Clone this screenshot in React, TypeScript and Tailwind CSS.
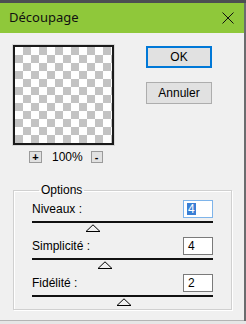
import React from 'react';

const rows = [
  { label: 'Niveaux :', value: '4', thumb: 'ml-[53px]', selected: true },
  { label: 'Simplicité :', value: '4', thumb: 'ml-[65px]', selected: false },
  { label: 'Fidélité :', value: '2', thumb: 'ml-[84px]', selected: false },
];

function Thumb() {
  return (
    <svg width="16" height="8" viewBox="0 0 16 8" className="block">
      <path d="M1 7.5 L8 0.8 L15 7.5 Z" fill="none" stroke="#000" strokeWidth="1" />
    </svg>
  );
}

export default function App() {
  return (
    <div className="w-[246px] h-[324px] flex flex-col overflow-hidden bg-[#e6e6e6] font-['Liberation_Sans',Arial,sans-serif] text-black">
      <div className="h-[3px] bg-[#4c4f52]" />
      <div className="flex">
        <div className="w-[244px] flex flex-col">
          {/* title bar */}
          <div className="h-[30px] bg-[#8fc83a] flex items-center justify-between pl-[9px] pr-[10px]">
            <span className="font-['Noto_Sans',sans-serif] text-[13px] text-[#111]">Découpage</span>
            <svg width="12" height="12" viewBox="0 0 12 12">
              <path d="M0.5 0.5 L11.5 11.5 M11.5 0.5 L0.5 11.5" stroke="#111" strokeWidth="1" />
            </svg>
          </div>

          {/* body */}
          <div className="h-[288px] bg-[#f0f0f0] border-b border-[#b4b4b4] flex flex-col">
            <div className="flex pt-[12px] pl-[13px]">
              <div className="flex flex-col">
                <div className="w-[101px] h-[100px] border-2 border-[#1a1a1a] shadow-[0_0_0_1px_#d8d8d8] bg-[conic-gradient(#c3c3c3_25%,#ffffff_0_50%,#c3c3c3_0_75%,#ffffff_0)] bg-[length:16px_16px]" />
                <div className="flex items-center h-[12px] mt-[6px] pl-[16px] text-[12px]">
                  <div className="w-[13px] h-[12px] bg-[#e1e1e1] border border-[#9a9a9a] flex items-center justify-center text-[11px] leading-none font-bold">+</div>
                  <span className="ml-[10px] leading-none">100%</span>
                  <div className="ml-[8px] w-[12px] h-[12px] bg-[#e1e1e1] border border-[#9a9a9a] flex items-center justify-center text-[11px] leading-none font-bold">-</div>
                </div>
              </div>
              <div className="flex flex-col ml-[32px] pt-[1px] gap-[14px]">
                <button className="w-[66px] h-[22px] bg-[#e1e1e1] border-2 border-[#0078d7] text-[12px] leading-none">OK</button>
                <button className="w-[66px] h-[22px] bg-[#e1e1e1] border border-[#adadad] text-[12px] leading-none">Annuler</button>
              </div>
            </div>

            {/* options group */}
            <fieldset className="mt-[20px] ml-[13px] w-[219px] border border-[#d0d0d0] shadow-[inset_1px_1px_0_#ffffff,1px_1px_0_#ffffff] px-[18px] pb-[3px]">
              <legend className="ml-[7px] px-[2px] text-[12px] leading-[14px]">Options</legend>
              <div className="flex flex-col gap-[5px] pt-[3px]">
                {rows.map((r) => (
                  <div key={r.label} className="flex flex-col">
                    <div className="flex items-center justify-between h-[18px]">
                      <span className="text-[12px] leading-none">{r.label}</span>
                      <div className={`w-[30px] h-[18px] bg-white border flex items-center pl-[4px] text-[12px] leading-none ${r.selected ? 'border-[#7eb4ea]' : 'border-[#7a7a7a]'}`}>
                        <span className={r.selected ? 'bg-[#3a7fd5] text-white px-[1px] -ml-[1px]' : ''}>{r.value}</span>
                      </div>
                    </div>
                    <div className="mt-[3px] h-[2px] bg-[#111]" />
                    <div className={`${r.thumb} mt-[1px]`}>
                      <Thumb />
                    </div>
                  </div>
                ))}
              </div>
            </fieldset>
          </div>
        </div>
        <div className="w-[2px] bg-[#6a6c6e]" />
      </div>
    </div>
  );
}
